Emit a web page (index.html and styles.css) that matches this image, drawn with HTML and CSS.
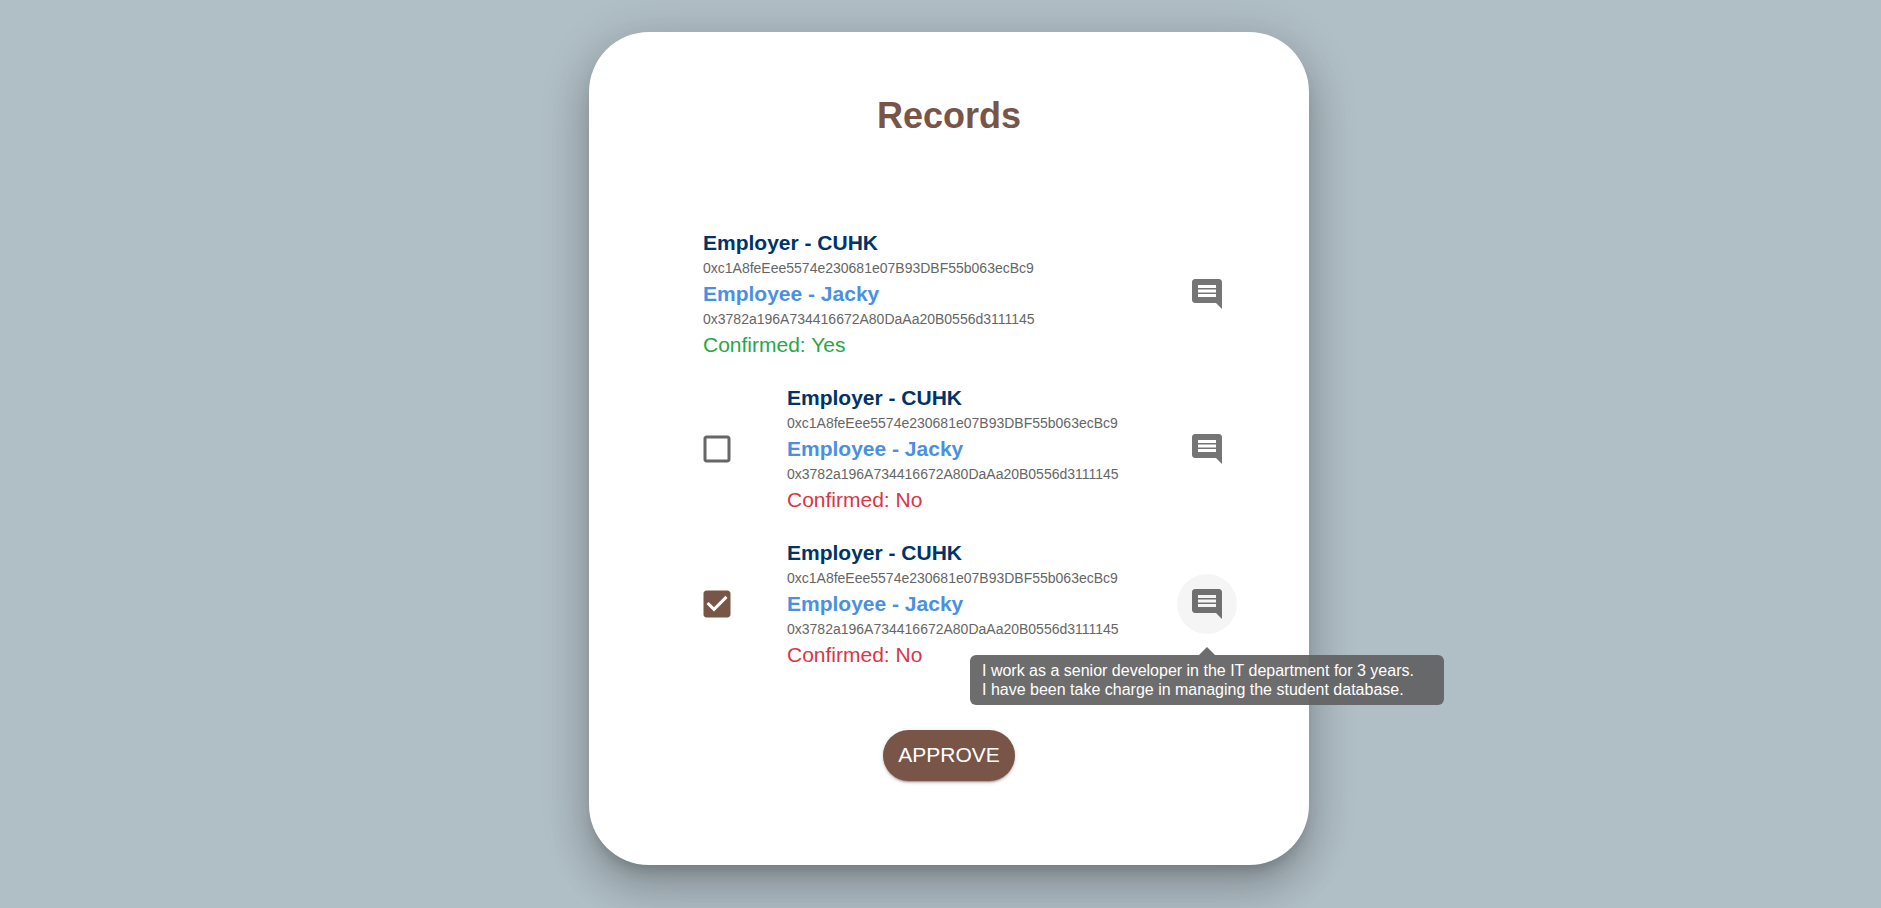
FILE: index.html
```html
<!DOCTYPE html>
<html lang="en">
<head>
  <meta charset="utf-8">
  <title>Records</title>
  <link rel="stylesheet" href="styles.css">
</head>
<body>
  <svg class="sprite" aria-hidden="true">
    <symbol id="icon-comment" viewBox="0 0 24 24"><path d="M21.99 4c0-1.1-.89-2-1.99-2H4c-1.1 0-2 .9-2 2v12c0 1.1.9 2 2 2h14l4 4-.01-18zM18 14H6v-2h12v2zm0-3H6V9h12v2zm0-3H6V6h12v2z"/></symbol>
    <symbol id="icon-unchecked" viewBox="0 0 24 24"><path d="M19 5v14H5V5h14m0-2H5c-1.1 0-2 .9-2 2v14c0 1.1.9 2 2 2h14c1.1 0 2-.9 2-2V5c0-1.1-.9-2-2-2z"/></symbol>
    <symbol id="icon-checked" viewBox="0 0 24 24"><path d="M19 3H5c-1.11 0-2 .9-2 2v14c0 1.1.89 2 2 2h14c1.11 0 2-.9 2-2V5c0-1.1-.89-2-2-2zm-9 14l-5-5 1.41-1.41L10 14.17l7.59-7.59L19 8l-9 9z"/></symbol>
  </svg>
  <main class="card">
    <h1 class="title">Records</h1>
    <ul class="records">
      <li class="record record-plain">
        <div class="details">
          <p class="employer">Employer - CUHK</p>
          <p class="address">0xc1A8feEee5574e230681e07B93DBF55b063ecBc9</p>
          <p class="employee">Employee - Jacky</p>
          <p class="address">0x3782a196A734416672A80DaAa20B0556d3111145</p>
          <p class="status status-yes">Confirmed: Yes</p>
        </div>
        <div class="action">
          <button class="icon-button" type="button" aria-label="Comment"><svg class="icon"><use href="#icon-comment"/></svg></button>
        </div>
      </li>
      <li class="record">
        <span class="checkbox">
          <input class="checkbox-input" type="checkbox" aria-labelledby="record-2">
          <svg class="icon icon-off"><use href="#icon-unchecked"/></svg>
          <svg class="icon icon-on"><use href="#icon-checked"/></svg>
        </span>
        <div class="details" id="record-2">
          <p class="employer">Employer - CUHK</p>
          <p class="address">0xc1A8feEee5574e230681e07B93DBF55b063ecBc9</p>
          <p class="employee">Employee - Jacky</p>
          <p class="address">0x3782a196A734416672A80DaAa20B0556d3111145</p>
          <p class="status status-no">Confirmed: No</p>
        </div>
        <div class="action">
          <button class="icon-button" type="button" aria-label="Comment"><svg class="icon"><use href="#icon-comment"/></svg></button>
        </div>
      </li>
      <li class="record">
        <span class="checkbox">
          <input class="checkbox-input" type="checkbox" aria-labelledby="record-3" checked>
          <svg class="icon icon-off"><use href="#icon-unchecked"/></svg>
          <svg class="icon icon-on"><use href="#icon-checked"/></svg>
        </span>
        <div class="details" id="record-3">
          <p class="employer">Employer - CUHK</p>
          <p class="address">0xc1A8feEee5574e230681e07B93DBF55b063ecBc9</p>
          <p class="employee">Employee - Jacky</p>
          <p class="address">0x3782a196A734416672A80DaAa20B0556d3111145</p>
          <p class="status status-no">Confirmed: No</p>
        </div>
        <div class="action">
          <button class="icon-button is-hovered" type="button" aria-label="Comment" aria-describedby="tooltip"><svg class="icon"><use href="#icon-comment"/></svg></button>
          <div class="tooltip" id="tooltip" role="tooltip">I work as a senior developer in the IT department for 3 years.<br>I have been take charge in managing the student database.</div>
        </div>
      </li>
    </ul>
    <button class="approve" type="button">APPROVE</button>
  </main>
</body>
</html>
```

FILE: styles.css
```css
* {
  box-sizing: border-box;
}

body {
  margin: 0;
  min-height: 100vh;
  padding: 32px 0 32px 17px;
  background: #b0bec5;
  font-family: "Liberation Sans", Arial, sans-serif;
  font-size: 21px;
}

.sprite {
  display: none;
}

.card {
  display: flex;
  flex-direction: column;
  align-items: center;
  max-width: 720px;
  margin: 0 auto;
  padding: 63px 72px 84px 98px;
  border-radius: 60px;
  background: #fff;
  box-shadow: 0 11px 15px -7px rgba(0, 0, 0, 0.2),
    0 24px 38px 3px rgba(0, 0, 0, 0.14),
    0 9px 46px 8px rgba(0, 0, 0, 0.12);
}

.title {
  margin: 0 26px 93px 0;
  color: #795548;
  font-size: 36px;
  line-height: 42px;
}

.records {
  display: flex;
  flex-direction: column;
  gap: 27px;
  align-self: stretch;
  margin: 0;
  padding: 0;
  list-style: none;
}

.record {
  display: flex;
  align-items: center;
  gap: 40px;
}

.record-plain {
  padding-left: 16px;
}

.details {
  flex: 1;
}

.details p {
  margin: 0;
  line-height: 26px;
}

.employer {
  color: #003366;
  font-weight: bold;
}

.employee {
  color: #4a90e2;
  font-weight: bold;
}

.details .address {
  color: #666;
  font-size: 14px;
  line-height: 25px;
}

.status-yes {
  color: #28a745;
}

.status-no {
  color: #dc3545;
}

.icon {
  display: block;
  width: 36px;
  height: 36px;
  fill: currentColor;
}

.checkbox {
  display: grid;
  padding: 12px;
  color: #666;
}

.checkbox > * {
  grid-area: 1 / 1;
}

.checkbox-input {
  appearance: none;
  width: 36px;
  height: 36px;
  margin: 0;
  cursor: pointer;
}

.checkbox .icon {
  pointer-events: none;
}

.icon-on {
  color: #795548;
}

.checkbox-input:not(:checked) ~ .icon-on,
.checkbox-input:checked ~ .icon-off {
  visibility: hidden;
}

.action {
  position: relative;
}

.icon-button {
  display: block;
  padding: 12px;
  border: 0;
  border-radius: 50%;
  background: transparent;
  color: rgba(0, 0, 0, 0.54);
  cursor: pointer;
}

.icon-button:hover,
.icon-button.is-hovered {
  background: rgba(0, 0, 0, 0.04);
}

.tooltip {
  position: absolute;
  top: 81px;
  left: 50%;
  min-width: 474px;
  padding: 6px 12px;
  border-radius: 6px;
  background: rgba(97, 97, 97, 0.92);
  color: #fff;
  font-size: 16px;
  line-height: 19px;
  white-space: nowrap;
  transform: translateX(-50%);
}

.tooltip::before {
  content: "";
  position: absolute;
  bottom: 100%;
  left: 50%;
  border: 8px solid transparent;
  border-top: 0;
  border-bottom-color: rgba(97, 97, 97, 0.92);
  transform: translateX(-50%);
}

.approve {
  margin: 62px 26px 0 0;
  padding: 11px 15px 13px;
  border: 0;
  border-radius: 26px;
  background: #795548;
  color: #fff;
  font: inherit;
  line-height: 27px;
  box-shadow: 0 3px 1px -2px rgba(0, 0, 0, 0.2),
    0 2px 2px 0 rgba(0, 0, 0, 0.14),
    0 1px 5px 0 rgba(0, 0, 0, 0.12);
  cursor: pointer;
}
```
